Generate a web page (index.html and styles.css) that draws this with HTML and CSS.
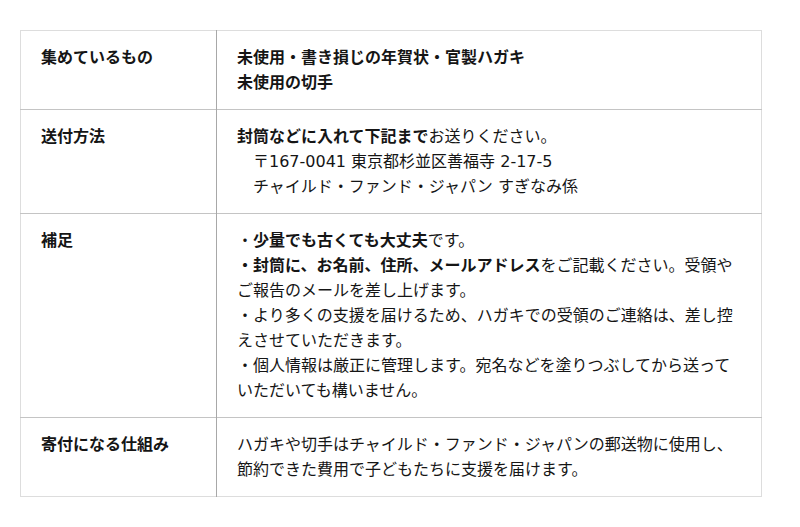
FILE: index.html
```html
<!DOCTYPE html>
<html lang="ja">
<head>
<meta charset="utf-8">
<link rel="stylesheet" href="styles.css">
</head>
<body>
<table class="info">
  <tr>
    <th>集めているもの</th>
    <td><b>未使用・書き損じの年賀状・官製ハガキ<br>未使用の切手</b></td>
  </tr>
  <tr>
    <th>送付方法</th>
    <td><b>封筒などに入れて下記まで</b>お送りください。<br><span class="addr">〒167-0041 東京都杉並区善福寺 2-17-5</span><br><span class="addr">チャイルド・ファンド・ジャパン すぎなみ係</span></td>
  </tr>
  <tr>
    <th>補足</th>
    <td>・<b>少量でも古くても大丈夫</b>です。<br><b>・封筒に、お名前、住所、メールアドレス</b>をご記載ください。受領やご報告のメールを差し上げます。<br>・より多くの支援を届けるため、ハガキでの受領のご連絡は、差し控えさせていただきます。<br>・個人情報は厳正に管理します。宛名などを塗りつぶしてから送っていただいても構いません。</td>
  </tr>
  <tr>
    <th>寄付になる仕組み</th>
    <td>ハガキや切手はチャイルド・ファンド・ジャパンの郵送物に使用し、<br>節約できた費用で子どもたちに支援を届けます。</td>
  </tr>
</table>
</body>
</html>
```
FILE: styles.css
```css
html, body {
  margin: 0;
  padding: 0;
  background: #fff;
}
body {
  padding: 30px 38px 0 20px;
  font-family: "DejaVu Sans", "Noto Sans CJK JP", sans-serif;
  font-size: 16px;
  line-height: 25px;
  color: #151515;
}
.info {
  width: 742px;
  border-collapse: collapse;
  border: 1px solid #ddd;
}
.info tr {
  border-top: 1px solid #c4c4c4;
}
.info tr:first-child {
  border-top: 1px solid #ddd;
}
.info tr:last-child {
  border-bottom: 1px solid #ddd;
}
.info th {
  width: 155px;
  text-align: left;
  vertical-align: top;
  font-weight: bold;
  padding: 14px 20px 14px 20px;
  border-right: 1px solid #a8a8a8;
}
.info td {
  vertical-align: top;
  padding: 14px 24px 14px 20px;
}
.info b {
  font-weight: bold;
}
.addr {
  padding-left: 16px;
}
```
